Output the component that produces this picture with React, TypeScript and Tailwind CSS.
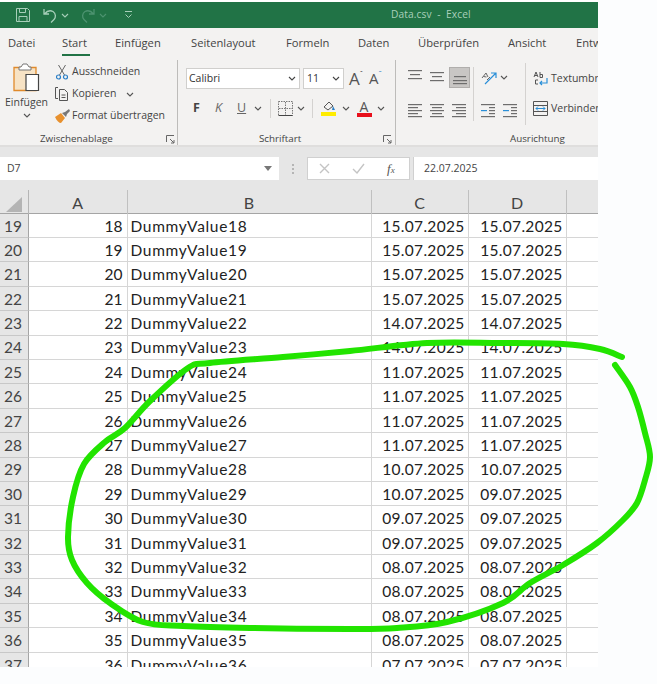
import React from "react";

const rows: [string, string][] = [
  ["15", "15"], ["15", "15"], ["15", "15"], ["15", "15"], ["14", "14"], ["14", "14"],
  ["11", "11"], ["11", "11"], ["11", "11"], ["11", "11"], ["10", "10"], ["10", "09"],
  ["09", "09"], ["09", "09"], ["08", "08"], ["08", "08"], ["08", "08"], ["08", "08"], ["07", "07"],
];

const stroke: [number, number][] = [
  [622, 357], [600, 349], [563, 344], [500, 343], [427, 343], [350, 351], [283, 357], [210, 363], [188, 368],
  [150, 401], [125, 428], [105, 442], [84, 464], [73, 497], [68, 537], [72, 560], [87, 583], [110, 603],
  [143, 622], [183, 626], [250, 628], [350, 629], [397, 628], [447, 622], [503, 603], [530, 583], [563, 565],
  [597, 543], [623, 520], [637, 503], [645, 480], [650, 457], [645, 433], [638, 407], [630, 387], [615, 365],
];

function smooth(p: [number, number][]) {
  let d = `M${p[0][0]} ${p[0][1]}`;
  for (let i = 0; i < p.length - 1; i++) {
    const a = p[Math.max(i - 1, 0)], b = p[i], c = p[i + 1], e = p[Math.min(i + 2, p.length - 1)];
    d += ` C${b[0] + (c[0] - a[0]) / 6} ${b[1] + (c[1] - a[1]) / 6} ${c[0] - (e[0] - b[0]) / 6} ${c[1] - (e[1] - b[1]) / 6} ${c[0]} ${c[1]}`;
  }
  return d;
}

const Chev = ({ c = "#555", className = "" }: { c?: string; className?: string }) => (
  <svg width="8" height="5" viewBox="0 0 8 5" className={className}><path d="M1 1l3 3 3-3" fill="none" stroke={c} strokeWidth="1.1" /></svg>
);

const Launcher = () => (
  <svg width="9" height="9" viewBox="0 0 9 9"><path d="M.5 7V.5H8M4 4l4 4M8 5v3H5" fill="none" stroke="#666" strokeWidth="1" /></svg>
);

const Lines = ({ w, rows: r }: { w: number; rows: [number, number, number, string?][] }) => (
  <svg width={w} height="15" viewBox={`0 0 ${w} 15`}>
    {r.map(([x, y, l, col], i) => (
      <rect key={i} x={x} y={y} width={l} height="1.2" fill={col || "#6d6d6d"} />
    ))}
  </svg>
);

const VSep = ({ className = "" }: { className?: string }) => <div className={`w-px bg-[#d4d2d0] ${className}`} />;

const Tab = ({ label, className = "" }: { label: string; className?: string }) => (
  <span className={`shrink-0 text-[#444] whitespace-nowrap ${className}`}>{label}</span>
);

export default function App() {
  return (
    <div className="relative w-[657px] h-[684px] bg-[#fcfdfe] overflow-hidden font-['Open_Sans',sans-serif]">
      <div className="w-[598px] h-[667px] flex flex-col bg-[#e6e6e6] overflow-hidden">
        {/* title bar */}
        <div className="h-[2px] bg-white shrink-0" />
        <div className="h-[26px] shrink-0 bg-[#217346] flex items-center pl-[15px] text-[#a9d0bb]">
          <svg width="16" height="16" viewBox="0 0 16 16" fill="none" stroke="#a7cfb9" strokeWidth="1">
            <path d="M1.500 1.500h11l2 2v11h-13z" /><path d="M4.500 1.500v4h6v-4M4 14.500v-5h8v5" />
          </svg>
          <svg width="16" height="15" viewBox="0 0 16 15" fill="none" stroke="#a7cfb9" strokeWidth="1.300" className="ml-[11px]">
            <path d="M2 1v5h5M2.500 6C5 3 8 2 11 3.500c3 2 3 6 1 8l-3 3" />
          </svg>
          <Chev c="#a7cfb9" className="ml-[3px]" />
          <svg width="16" height="15" viewBox="0 0 16 15" fill="none" stroke="#4d9370" strokeWidth="1.300" className="ml-[11px]">
            <path d="M14 1v5H9M13.500 6C11 3 8 2 5 3.500c-3 2-3 6-1 8l3 3" />
          </svg>
          <Chev c="#4d9370" className="ml-[3px]" />
          <svg width="9" height="8" viewBox="0 0 9 8" className="ml-[17px]" fill="none" stroke="#a7cfb9">
            <path d="M1 .5h7M1.500 3.500L4.500 6.500 7.500 3.500" />
          </svg>
          <span className="ml-[258px] text-[10.200px] tracking-[0.1px] whitespace-pre">Data.csv  -  Excel</span>
        </div>

        {/* tabs */}
        <div className="h-[30px] shrink-0 bg-[#f3f2f1] flex items-center text-[11.200px] pl-[8px] pt-[1px]">
          <Tab label="Datei" className="w-[54px]" />
          <div className="w-[53px] shrink-0 relative">
            <span className="text-[#444]">Start</span>
            <div className="absolute left-0 top-[18.500px] w-[28px] h-[2.500px] bg-[#217346]" />
          </div>
          <Tab label="Einfügen" className="w-[76px]" />
          <Tab label="Seitenlayout" className="w-[95px]" />
          <Tab label="Formeln" className="w-[72px]" />
          <Tab label="Daten" className="w-[60px]" />
          <Tab label="Überprüfen" className="w-[90px]" />
          <Tab label="Ansicht" className="w-[68px]" />
          <Tab label="Entw" />
        </div>

        {/* ribbon */}
        <div className="h-[89px] shrink-0 bg-[#f3f2f1] flex text-[10.500px] text-[#444] overflow-hidden border-b-2 border-[#dfdedd]">
          {/* clipboard */}
          <div className="w-[178px] shrink-0 flex flex-col border-r border-[#bdbcba] mt-[2px]">
            <div className="flex h-[73px] shrink-0">
              <div className="w-[53px] shrink-0 flex flex-col items-center pt-[3px]">
                <svg width="27" height="29" viewBox="0 0 27 29" fill="none">
                  <path d="M1 4.500h22v23H1z" fill="#f7e3c5" stroke="#e08a2c" strokeWidth="1.300" />
                  <path d="M8 4l2-3h4l2 3h2v3H6V4z" fill="#fff" stroke="#777" />
                  <path d="M13 11.500h12.500v16H13z" fill="#fff" stroke="#444" strokeWidth="1.200" />
                </svg>
                <span className="leading-[14px] mt-[3px] text-[10.500px]">Einfügen</span>
                <Chev className="mt-[4px]" />
              </div>
              <div className="flex flex-col">
                <div className="flex items-center h-[23px]">
                  <svg width="12" height="16" viewBox="0 0 12 16" className="ml-[3px] mr-[4px]" fill="none">
                    <path d="M2.500 1l6 10M9.500 1l-6 10" stroke="#666" />
                    <circle cx="2.500" cy="13" r="2" stroke="#2a7fc7" strokeWidth="1.200" />
                    <circle cx="9.500" cy="13" r="2" stroke="#2a7fc7" strokeWidth="1.200" />
                  </svg>
                  <span>Ausschneiden</span>
                </div>
                <div className="flex items-center h-[22px]">
                  <svg width="16" height="16" viewBox="0 0 16 16" className="mr-[2px] ml-[1px]" fill="none" stroke="#555">
                    <path d="M4 1.500H1.500v11H4M5.500 3.500h5l3 3v8h-8zM7.500 9h4M7.500 11.500h4" />
                  </svg>
                  <span>Kopieren</span>
                  <Chev className="ml-[10px]" />
                </div>
                <div className="flex items-center h-[22px]">
                  <svg width="16" height="15" viewBox="0 0 16 15" className="mr-[2px] ml-[1px]">
                    <path d="M1 8l6-4 4 5-4 5C5 14 3 12 1 8z" fill="#e8912e" />
                    <path d="M8 4l3-1 4-3 1 2-3 3-1 3z" fill="#777" />
                  </svg>
                  <span className="whitespace-nowrap">Format übertragen</span>
                </div>
              </div>
            </div>
            <div className="flex items-center justify-between pl-[40px] pr-[2px] leading-[12px] text-[9.800px]">
              <span>Zwischenablage</span>
              <Launcher />
            </div>
          </div>

          {/* font */}
          <div className="w-[218px] shrink-0 flex flex-col border-r border-[#bdbcba] mt-[2px]">
            <div className="h-[73px] shrink-0 pl-[8px] flex flex-col">
              <div className="flex items-center mt-[8px] h-[21px]">
                <div className="w-[114px] h-[21px] bg-white border border-[#d0cfcd] flex items-center justify-between pl-[2px] pr-[3px] text-[#333]">
                  <span>Calibri</span><Chev c="#444" />
                </div>
                <div className="ml-[3px] w-[41px] h-[21px] bg-white border border-[#d0cfcd] flex items-center justify-between pl-[3px] pr-[3px] text-[#333]">
                  <span>11</span><Chev c="#444" />
                </div>
                <span className="ml-[5px] text-[17px] leading-none text-[#555]">A</span>
                <span className="text-[8px] leading-none text-[#444] self-start mt-[1px]">ˆ</span>
                <span className="ml-[6px] text-[15px] leading-none text-[#555]">A</span>
                <span className="text-[8px] leading-none text-[#2a7fc7] self-start mt-[1px]">ˇ</span>
              </div>
              <div className="flex items-center h-[24px] mt-[7px]">
                <span className="w-[22px] ml-[7px] font-bold text-[12.500px]">F</span>
                <span className="w-[22px] italic text-[12.500px] text-[#666]">K</span>
                <span className="w-[16px] underline text-[12.500px] text-[#666]">U</span>
                <Chev className="ml-[1px]" />
                <VSep className="h-[19px] ml-[8px]" />
                <svg width="15" height="15" viewBox="0 0 15 15" className="ml-[7px]" fill="none" stroke="#777">
                  <path d="M.5.500h14v14H.5z" strokeDasharray="1.500 1" /><path d="M7.500 1v13M1 7.500h13" strokeDasharray="1.500 1" /><path d="M.5 14.500h14" stroke="#444" />
                </svg>
                <Chev className="ml-[4px]" />
                <VSep className="h-[19px] ml-[7px]" />
                <svg width="16" height="18" viewBox="0 0 16 18" className="ml-[8px]">
                  <path d="M3 8l5-5 4 4-5 4z" fill="none" stroke="#555" />
                  <path d="M12 7l2 4h-3z" fill="#2a7fc7" />
                  <rect x="0" y="13" width="15" height="4" fill="#ffec00" />
                </svg>
                <Chev className="ml-[5px]" />
                <div className="ml-[6px] w-[16px] flex flex-col items-center">
                  <span className="text-[14px] leading-[13px] text-[#555]">A</span>
                  <div className="w-[15px] h-[4px] bg-[#e8101c]" />
                </div>
                <Chev className="ml-[5px]" />
              </div>
            </div>
            <div className="flex items-center justify-between pl-[81px] pr-[3px] leading-[12px] text-[9.800px]">
              <span>Schriftart</span>
              <Launcher />
            </div>
          </div>

          {/* alignment */}
          <div className="flex-1 flex flex-col mt-[2px] overflow-hidden">
            <div className="h-[73px] shrink-0 flex pl-[12px]">
              <div className="flex flex-col w-[65px] shrink-0 mt-[7px]">
                <div className="flex items-center h-[21px]">
                  <div className="w-[22px]"><Lines w={14} rows={[[0, 0, 14], [2, 4, 10], [0, 8, 14]]} /></div>
                  <div className="w-[19px]"><Lines w={14} rows={[[0, 2, 14], [2, 6, 10], [0, 10, 14]]} /></div>
                  <div className="w-[21px] h-[21px] bg-[#c8c6c4] border border-[#b0aeac] flex items-center justify-center">
                    <Lines w={14} rows={[[1, 6, 12], [0, 10, 14], [0, 13, 14]]} />
                  </div>
                </div>
                <div className="flex items-center h-[21px] mt-[12px]">
                  <div className="w-[22px]"><Lines w={14} rows={[[0, 1, 14], [0, 4, 10], [0, 7, 14], [0, 10, 10], [0, 13, 14]]} /></div>
                  <div className="w-[22px]"><Lines w={14} rows={[[0, 1, 14], [2, 4, 10], [0, 7, 14], [2, 10, 10], [0, 13, 14]]} /></div>
                  <div><Lines w={14} rows={[[0, 1, 14], [4, 4, 10], [0, 7, 14], [4, 10, 10], [0, 13, 14]]} /></div>
                </div>
              </div>
              <div className="flex flex-col w-[52px] shrink-0 mt-[7px] h-[54px] border-l border-[#d4d2d0]">
                <div className="flex items-center h-[21px] pl-[7px]">
                  <svg width="16" height="16" viewBox="0 0 16 16" fill="none">
                    <path d="M4 14L15 3M10 3h5v5" stroke="#2a8fd8" strokeWidth="1.200" />
                    <path d="M1 8l4-5 2 4M2.500 6.500l3 .5M6 10l3-3" stroke="#666" />
                  </svg>
                  <Chev className="ml-[3px]" />
                </div>
                <div className="flex items-center h-[21px] mt-[12px] pl-[7px] gap-[8px]">
                  <Lines w={14} rows={[[0, 1, 14], [8, 4, 6], [8, 7, 6], [0, 7, 6, "#2a8fd8"], [8, 10, 6], [0, 13, 14]]} />
                  <Lines w={14} rows={[[0, 1, 14], [8, 4, 6], [0, 7, 6, "#2a8fd8"], [8, 7, 6], [8, 10, 6], [0, 13, 14]]} />
                </div>
              </div>
              <div className="flex flex-col shrink-0 mt-[3px] h-[62px] border-l border-[#d4d2d0] pl-[7px]">
                <div className="flex items-center h-[24px] mt-[4px]">
                  <svg width="15" height="17" viewBox="0 0 15 17" fill="none">
                    <path d="M1 6l2-5 2 5M1.700 4.500h2.600M7 1v5.500M7 3.500h2.500v3H7M5 9H2.500v4H5" stroke="#555" />
                    <path d="M14 7v5H7M9 10l-2 2 2 2" stroke="#2a8fd8" strokeWidth="1.200" />
                  </svg>
                  <span className="whitespace-nowrap ml-[3px]">Textumbr</span>
                </div>
                <div className="flex items-center h-[21px] mt-[7px]">
                  <svg width="15" height="15" viewBox="0 0 15 15" fill="none">
                    <path d="M.5.500h14v14H.5z" stroke="#555" /><path d="M1 4.500h13M1 10.500h13" stroke="#555" /><path d="M3 7.500h9M5 5.500l-2 2 2 2M10 5.500l2 2-2 2" stroke="#2a8fd8" />
                  </svg>
                  <span className="whitespace-nowrap ml-[3px]">Verbinden</span>
                </div>
              </div>
            </div>
            <div className="leading-[12px] text-[9.800px] pl-[114px]">Ausrichtung</div>
          </div>
        </div>

        {/* formula bar */}
        <div className="h-[43px] shrink-0 bg-[#e6e6e6] flex pt-[10px] pb-[10px] text-[10.500px] text-[#444]">
          <div className="w-[279px] h-[23px] bg-white flex items-center justify-between pl-[7px] pr-[7px]">
            <span>D7</span>
            <svg width="8" height="5" viewBox="0 0 8 5"><path d="M0 0h8L4 5z" fill="#777" /></svg>
          </div>
          <div className="w-[29px] flex flex-col items-center justify-center gap-[2px] ml-[-1px]">
            <div className="w-[2px] h-[2px] bg-[#b5b5b5]" /><div className="w-[2px] h-[2px] bg-[#b5b5b5]" /><div className="w-[2px] h-[2px] bg-[#b5b5b5]" />
          </div>
          <div className="w-[103px] h-[23px] bg-white border border-[#d0d0d0] flex items-center pl-[11px]">
            <svg width="11" height="11" viewBox="0 0 11 11"><path d="M1 1l9 9M10 1l-9 9" stroke="#c4c4c4" strokeWidth="1.400" /></svg>
            <svg width="13" height="11" viewBox="0 0 13 11" className="ml-[22px]" fill="none"><path d="M1 6l4 4 7-9" stroke="#c4c4c4" strokeWidth="1.400" /></svg>
            <span className="ml-[22px] font-['Liberation_Serif',serif] italic text-[13px] leading-none text-[#555]">f<span className="text-[9px]">x</span></span>
          </div>
          <div className="flex-1 h-[23px] bg-white ml-[3px] border-l border-[#d0d0d0] flex items-center pl-[10px]">22.07.2025</div>
        </div>

        {/* sheet */}
        <div className="flex-1 overflow-hidden font-['Lato',sans-serif] text-[15.500px] text-[#222]">
          <div className="grid grid-cols-[29px_98.500px_244px_97px_98px_1fr] h-[23.600px] text-[16px] text-[#444] bg-[#e6e6e6] border-b border-[#a5a5a5]">
            <div className="border-r border-[#b5b5b5] flex items-end justify-center pb-[3px]">
              <svg width="16" height="15" viewBox="0 0 16 15"><path d="M16 0v15H0z" fill="#b4b4b4" /></svg>
            </div>
            <div className="border-r border-[#c0c0c0] flex items-center justify-center pt-[1px]">A</div>
            <div className="border-r border-[#c0c0c0] flex items-center justify-center pt-[1px]">B</div>
            <div className="border-r border-[#c0c0c0] flex items-center justify-center pt-[1px]">C</div>
            <div className="border-r border-[#c0c0c0] flex items-center justify-center pt-[1px]">D</div>
            <div />
          </div>
          {rows.map((r, i) => (
            <div key={i} className="grid grid-cols-[29px_98.500px_244px_97px_98px_1fr] h-[24.400px] bg-white leading-none">
              <div className="bg-[#e6e6e6] border-r border-b border-r-[#a5a5a5] border-b-[#c8c8c8] flex items-center pl-[4px] pt-[2px] text-[#444]">{i + 19}</div>
              <div className="border-r border-b border-[#d6d6d6] flex items-center justify-end pr-[4px] pt-[2px]">{i + 18}</div>
              <div className="border-r border-b border-[#d6d6d6] flex items-center pl-[3px] pt-[2px] tracking-[0.670px]">DummyValue{i + 18}</div>
              <div className="border-r border-b border-[#d6d6d6] flex items-center justify-end pr-[3px] pt-[2px] tracking-[0.300px]">{r[0]}.07.2025</div>
              <div className="border-r border-b border-[#d6d6d6] flex items-center justify-end pr-[3px] pt-[2px] tracking-[0.300px]">{r[1]}.07.2025</div>
              <div className="border-b border-[#d6d6d6]" />
            </div>
          ))}
        </div>
      </div>

      {/* hand-drawn highlight over the sheet */}
      <svg width="657" height="684" viewBox="0 0 657 684" className="absolute left-0 top-0 pointer-events-none">
        <path d={smooth(stroke)} fill="none" stroke="#22e400" strokeWidth="6" strokeLinecap="round" strokeLinejoin="round" />
      </svg>
    </div>
  );
}
